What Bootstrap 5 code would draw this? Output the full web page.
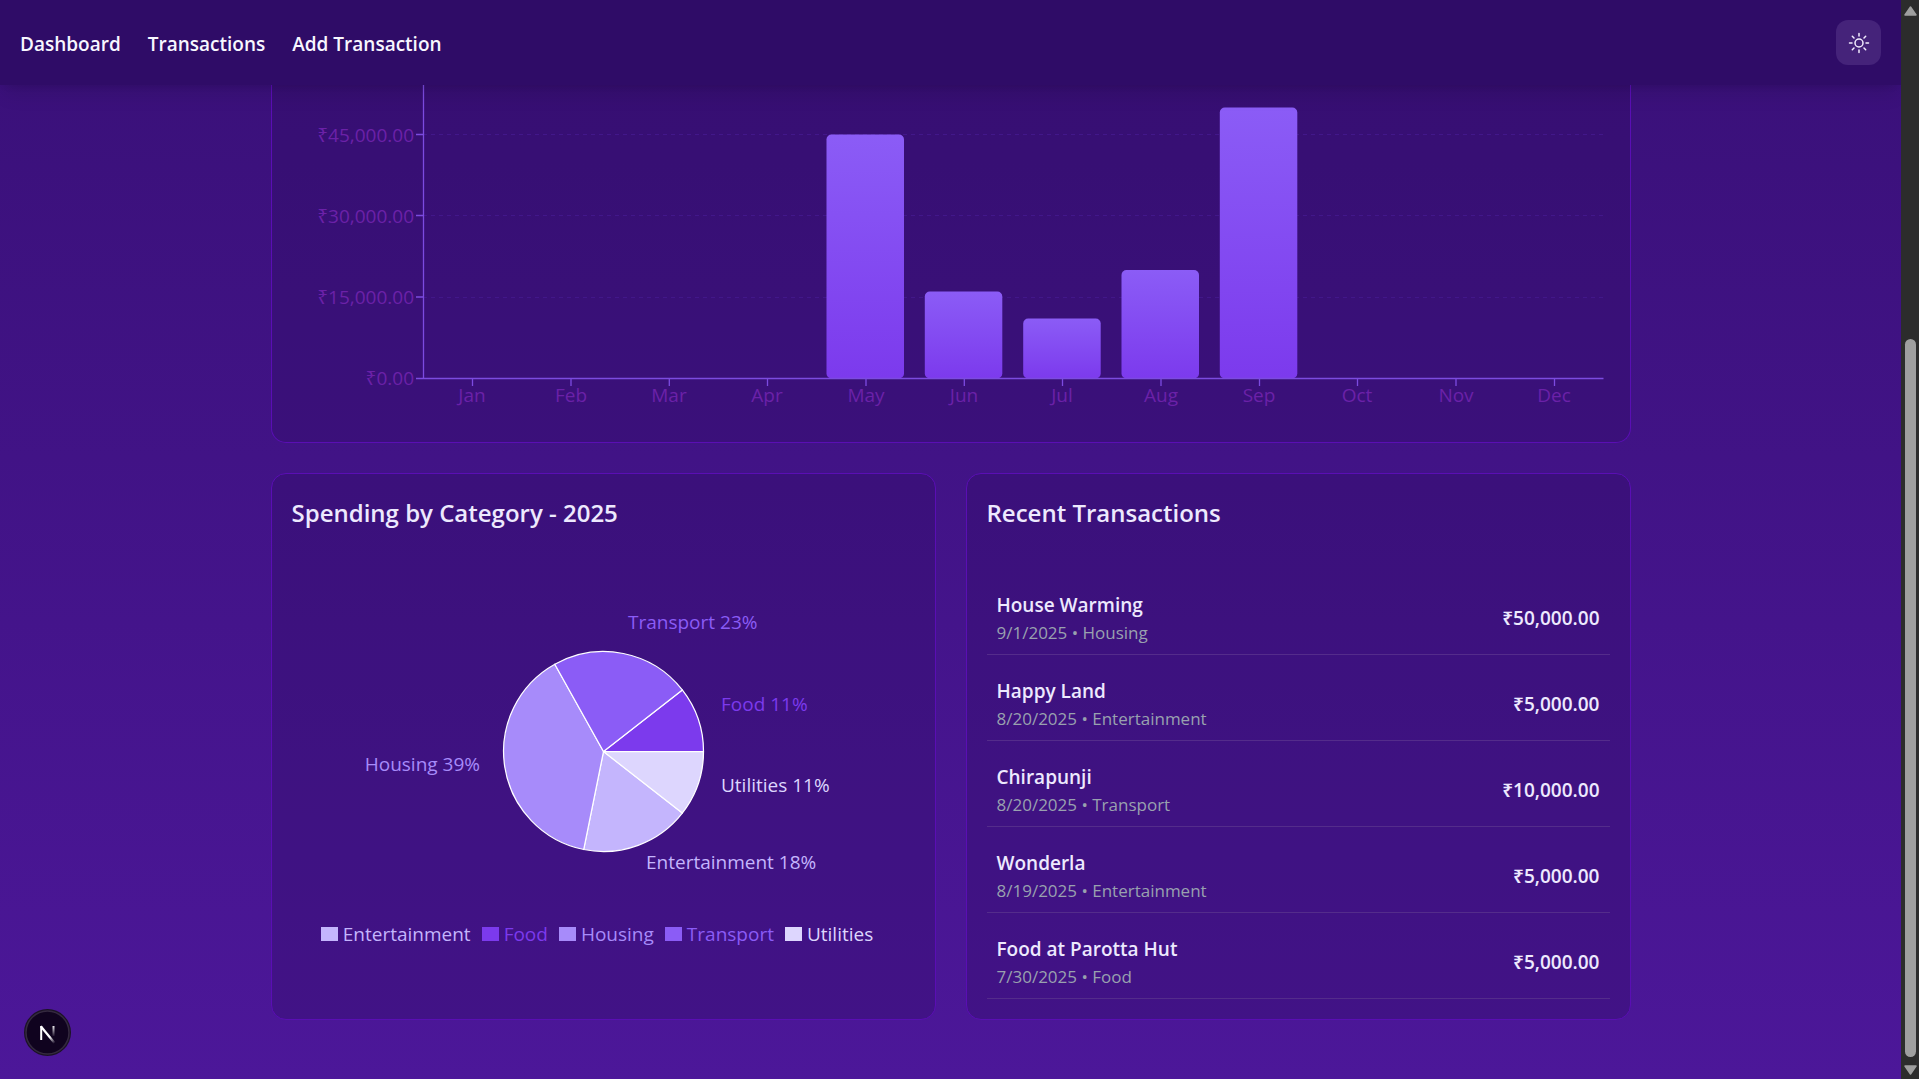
<!DOCTYPE html>
<html lang="en">
<head>
<meta charset="utf-8">
<meta name="viewport" content="width=device-width, initial-scale=1">
<title>Dashboard</title>
<link href="https://cdn.jsdelivr.net/npm/bootstrap@5.3.0/dist/css/bootstrap.min.css" rel="stylesheet">
<style>
  body { font-family: "Open Sans", "Noto Sans", sans-serif; font-size: 19px; color: #ede9fe; background: linear-gradient(#391078, #4c1799); }
  .topbar { height: 85px; padding: 0 20px; background: #2f0c67; z-index: 2; box-shadow: 0 12px 19px -4px rgba(0,0,0,.1), 0 5px 8px -5px rgba(0,0,0,.1); }
  .topbar .navbar-nav { gap: 27px; }
  .topbar .navbar-nav .nav-link { padding: 2px 0 0; font-weight: 600; color: #f8f7ff; line-height: 28px; }
  .theme-btn { width: 45px; height: 45px; padding: 0; border: 0; border-radius: 12px; background: #45237a; }
  .theme-btn:hover { background: #54318c; }
  .page-body { max-width: 1400px; padding: 0 20px 40px; }
  .panel { --bs-card-bg: rgba(46,12,101,.32); --bs-card-border-color: #5a0eb4; --bs-card-border-radius: 15px; --bs-card-inner-border-radius: 14px; color: inherit; padding: 20px; }
  .panel-chart { padding-top: 0; border-top: 0; border-top-left-radius: 0; border-top-right-radius: 0; }
  .panel-grid { --bs-gutter-x: 30px; --bs-gutter-y: 30px; margin-top: 0; }
  .panel-title { font-size: 24px; line-height: 38px; font-weight: 600; margin: 0 0 47px; }
  svg text { font-family: "Open Sans", "Noto Sans", sans-serif; font-size: 19px; }
  .ticks { fill: #6b21a8; }
  .legend { gap: 11px; line-height: 28px; padding-right: 12px; }
  .legend-item { gap: 5px; }
  .swatch { width: 17px; height: 14px; }
  .tx-list { gap: 10px; }
  .tx-item { padding: 12px 10px 8px; border-bottom: 1px solid #542c8b; }
  .tx-name { font-weight: 600; line-height: 29px; }
  .tx-meta { font-size: 17px; line-height: 26px; color: #99a1af; }
  .tx-amount { font-weight: 600; }
  .scroll-rail { width: 18px; background: #2c2c2c; padding: 0 3px 0 4px; height: 100vh; z-index: 3; }
  .rail-arrow { height: 22px; }
  .rail-space { flex: 317; }
  .rail-thumb { flex: 718; border-radius: 6px; background: #9f9f9f; }
  .dev-badge { left: 24px; bottom: 23px; width: 47px; height: 47px; padding: 0; border: 0; background: none; z-index: 4; }
</style>
</head>
<body class="d-flex min-vh-100">
<div class="flex-grow-1 d-flex flex-column">
  <nav class="topbar navbar navbar-expand sticky-top justify-content-between">
    <div class="navbar-nav">
      <a class="nav-link" href="#">Dashboard</a>
      <a class="nav-link" href="#">Transactions</a>
      <a class="nav-link" href="#">Add Transaction</a>
    </div>
    <button class="theme-btn btn d-flex align-items-center justify-content-center" type="button" aria-label="Toggle theme">
      <svg width="24" height="24" viewBox="0 0 24 24" fill="none" stroke="#f3eeff" stroke-width="1.5" stroke-linecap="round" aria-hidden="true">
        <circle cx="12" cy="12" r="4"/>
        <path d="M12 2.5v2.5M12 19v2.5M2.500 12h2.500M19 12h2.500M5.300 5.300l1.700 1.700M17 17l1.700 1.700M5.300 18.700l1.700-1.700M17 7l1.700-1.700"/>
      </svg>
    </button>
  </nav>

  <main class="page-body container-fluid">
    <section class="panel panel-chart card" aria-label="Monthly spending">
      <svg class="w-100 h-auto d-block" viewBox="1 0 1318 337" role="img" aria-label="Spending per month">
        <defs>
          <linearGradient id="barFill" x1="0" y1="0" x2="0" y2="1">
            <stop offset="0" stop-color="#8b5cf6"/><stop offset="1" stop-color="#7c3aed"/>
          </linearGradient>
        </defs>
        <g stroke="#42178a" stroke-dasharray="4 4">
          <path d="M132 49.500H1312M132 130.500H1312M132 212.500H1312"/>
        </g>
        <g fill="url(#barFill)">
          <rect x="535.500" y="49.500" width="77.500" height="244" rx="5"/>
          <rect x="633.800" y="206.500" width="77.500" height="87" rx="5"/>
          <rect x="732.200" y="233.500" width="77.500" height="60" rx="5"/>
          <rect x="830.500" y="185" width="77.500" height="108.500" rx="5"/>
          <rect x="928.800" y="22.500" width="77.500" height="271" rx="5"/>
        </g>
        <g stroke="#7c4be0" stroke-width="1.300" fill="none">
          <path d="M132.500 0V293.500M125 293.500H1312.500M125 49.500h7.500M125 130.500h7.500M125 212h7.500"/>
          <path d="M181.500 293.500v7.500M280 293.500v7.500M378.300 293.500v7.500M476.500 293.500v7.500M575 293.500v7.500M673.300 293.500v7.500M771.500 293.500v7.500M870 293.500v7.500M968.500 293.500v7.500M1066.500 293.500v7.500M1165 293.500v7.500M1263.500 293.500v7.500"/>
        </g>
        <g class="ticks" text-anchor="end">
          <text x="123" y="57">₹45,000.00</text>
          <text x="123" y="138">₹30,000.00</text>
          <text x="123" y="219">₹15,000.00</text>
          <text x="123" y="300">₹0.00</text>
        </g>
        <g class="ticks" text-anchor="middle">
          <text x="181" y="317">Jan</text><text x="280" y="317">Feb</text><text x="378" y="317">Mar</text>
          <text x="476" y="317">Apr</text><text x="575" y="317">May</text><text x="673" y="317">Jun</text>
          <text x="771" y="317">Jul</text><text x="870" y="317">Aug</text><text x="968" y="317">Sep</text>
          <text x="1066" y="317">Oct</text><text x="1165" y="317">Nov</text><text x="1263" y="317">Dec</text>
        </g>
      </svg>
    </section>

    <div class="panel-grid row">
      <div class="col-12 col-lg-6">
        <section class="panel card h-100">
          <h2 class="panel-title">Spending by Category - 2025</h2>
          <svg class="w-100 h-auto d-block" viewBox="1 0 623 341" role="img" aria-label="Share of spending per category">
            <g transform="translate(312.500 172.500)" stroke="#fff" stroke-width="1.250" stroke-linejoin="round">
              <path fill="#c4b5fd" d="M0 0L78.800 61.600A100 100 0 0 1 -19.800 98Z"/>
              <path fill="#7c3aed" d="M0 0L100 0A100 100 0 0 0 78.800 -61.600Z"/>
              <path fill="#a78bfa" d="M0 0L-19.800 98A100 100 0 0 1 -48.700 -87.300Z"/>
              <path fill="#8b5cf6" d="M0 0L-48.700 -87.300A100 100 0 0 1 78.800 -61.600Z"/>
              <path fill="#ddd6fe" d="M0 0L100 0A100 100 0 0 1 78.800 61.600Z"/>
            </g>
            <text x="337" y="50" fill="#8b5cf6">Transport 23%</text>
            <text x="430" y="132" fill="#7c3aed">Food 11%</text>
            <text x="430" y="213" fill="#ddd6fe">Utilities 11%</text>
            <text x="355" y="290" fill="#c4b5fd">Entertainment 18%</text>
            <text x="189" y="192" fill="#a78bfa" text-anchor="end">Housing 39%</text>
          </svg>
          <div class="legend d-flex flex-wrap justify-content-center">
            <div class="legend-item d-flex align-items-center" style="color:#c4b5fd"><span class="swatch" style="background:#c4b5fd"></span>Entertainment</div>
            <div class="legend-item d-flex align-items-center" style="color:#7c3aed"><span class="swatch" style="background:#7c3aed"></span>Food</div>
            <div class="legend-item d-flex align-items-center" style="color:#a78bfa"><span class="swatch" style="background:#a78bfa"></span>Housing</div>
            <div class="legend-item d-flex align-items-center" style="color:#8b5cf6"><span class="swatch" style="background:#8b5cf6"></span>Transport</div>
            <div class="legend-item d-flex align-items-center" style="color:#ddd6fe"><span class="swatch" style="background:#ddd6fe"></span>Utilities</div>
          </div>
        </section>
      </div>

      <div class="col-12 col-lg-6">
        <section class="panel card h-100">
          <h2 class="panel-title">Recent Transactions</h2>
          <ul class="tx-list list-unstyled d-flex flex-column mb-0">
            <li class="tx-item d-flex justify-content-between align-items-center">
              <div><div class="tx-name">House Warming</div><div class="tx-meta">9/1/2025 • Housing</div></div>
              <div class="tx-amount">₹50,000.00</div>
            </li>
            <li class="tx-item d-flex justify-content-between align-items-center">
              <div><div class="tx-name">Happy Land</div><div class="tx-meta">8/20/2025 • Entertainment</div></div>
              <div class="tx-amount">₹5,000.00</div>
            </li>
            <li class="tx-item d-flex justify-content-between align-items-center">
              <div><div class="tx-name">Chirapunji</div><div class="tx-meta">8/20/2025 • Transport</div></div>
              <div class="tx-amount">₹10,000.00</div>
            </li>
            <li class="tx-item d-flex justify-content-between align-items-center">
              <div><div class="tx-name">Wonderla</div><div class="tx-meta">8/19/2025 • Entertainment</div></div>
              <div class="tx-amount">₹5,000.00</div>
            </li>
            <li class="tx-item d-flex justify-content-between align-items-center">
              <div><div class="tx-name">Food at Parotta Hut</div><div class="tx-meta">7/30/2025 • Food</div></div>
              <div class="tx-amount">₹5,000.00</div>
            </li>
          </ul>
        </section>
      </div>
    </div>
  </main>
</div>

<div class="scroll-rail d-flex flex-column flex-shrink-0 sticky-top" aria-hidden="true">
  <svg class="rail-arrow" viewBox="0 0 11 22" overflow="visible"><path d="M5.500 7L11 15H0Z" fill="#9f9f9f" stroke="#9f9f9f" stroke-width="1.500" stroke-linejoin="round"/></svg>
  <div class="rail-space"></div>
  <div class="rail-thumb"></div>
  <svg class="rail-arrow" viewBox="0 0 11 22" overflow="visible"><path d="M5.500 17L0 9H11Z" fill="#9f9f9f" stroke="#9f9f9f" stroke-width="1.500" stroke-linejoin="round"/></svg>
</div>

<button class="dev-badge position-fixed" type="button" aria-label="Open developer tools">
  <svg class="d-block" width="47" height="47" viewBox="0 0 47 47" fill="none" aria-hidden="true">
    <defs>
      <linearGradient id="diag" x1="20" y1="20" x2="31" y2="34" gradientUnits="userSpaceOnUse"><stop offset=".55" stop-color="#fff"/><stop offset="1" stop-color="#fff" stop-opacity="0"/></linearGradient>
      <linearGradient id="stem" x1="29" y1="16" x2="29" y2="28" gradientUnits="userSpaceOnUse"><stop stop-color="#fff"/><stop offset="1" stop-color="#fff" stop-opacity="0"/></linearGradient>
    </defs>
    <circle cx="23.500" cy="23.500" r="23.500" fill="#1b1324"/>
    <circle cx="23.500" cy="23.500" r="21.500" fill="#10031f" stroke="#34293f" stroke-width="1.500"/>
    <path d="M17.200 31V17" stroke="#fff" stroke-width="2"/>
    <path d="M16.800 17.200L30.500 34" stroke="url(#diag)" stroke-width="2.200"/>
    <path d="M29.500 17V27" stroke="url(#stem)" stroke-width="2"/>
  </svg>
</button>
<script src="https://cdn.jsdelivr.net/npm/bootstrap@5.3.0/dist/js/bootstrap.bundle.min.js"></script>
</body>
</html>
